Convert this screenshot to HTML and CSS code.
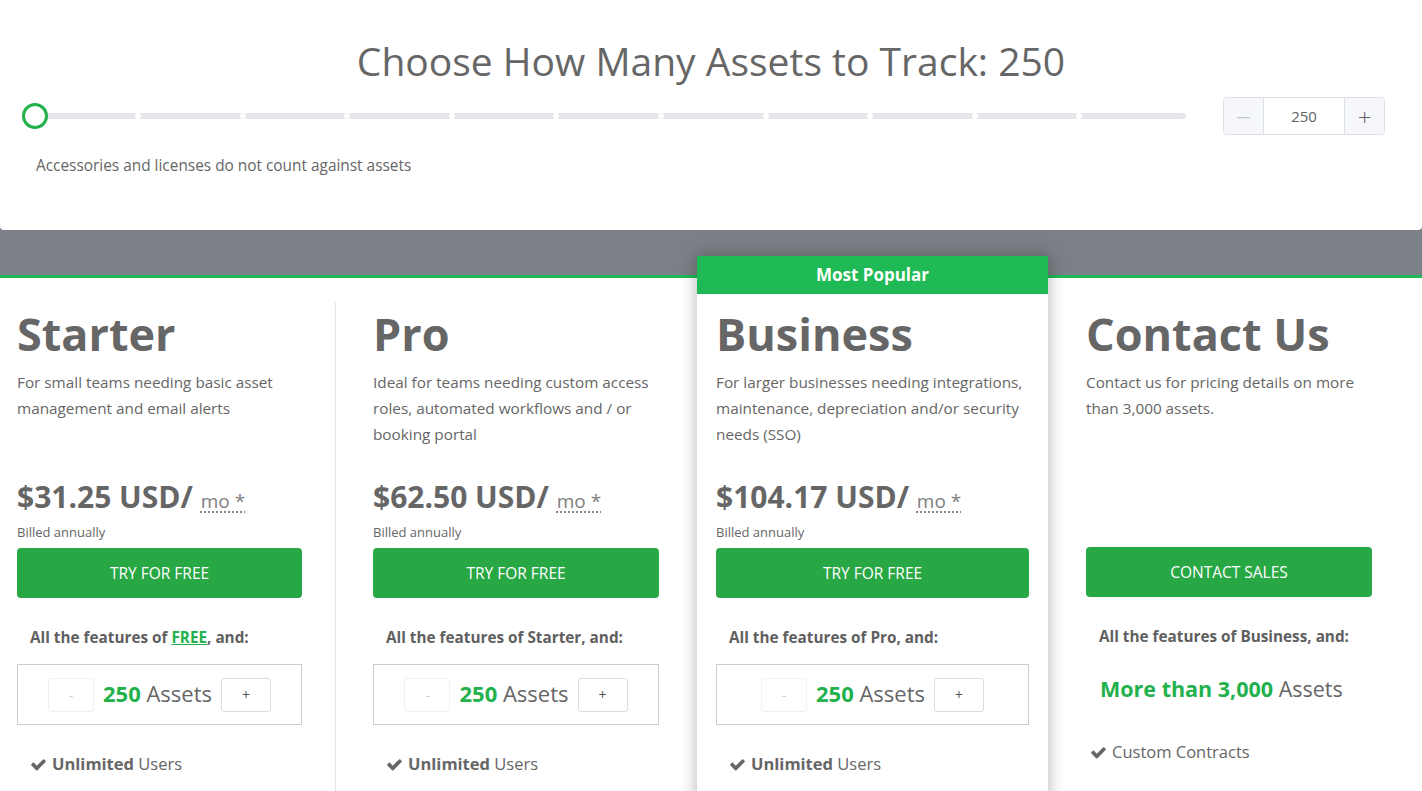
FILE: index.html
```html
<!DOCTYPE html>
<html lang="en">
<head>
    <meta charset="UTF-8">
    <meta name="viewport" content="width=device-width, initial-scale=1.0">
    <title>Pricing</title>
    <link rel="stylesheet" href="styles.css">
</head>
<body>
    <div class="band">
        <div class="picker">
            <h1>Choose How Many Assets to Track: 250</h1>
            <div class="picker-row">
                <div class="slider">
                    <div class="track">
                        <span></span><span></span><span></span><span></span><span></span><span></span>
                        <span></span><span></span><span></span><span></span><span></span>
                    </div>
                    <div class="thumb"></div>
                </div>
                <div class="stepper">
                    <button class="step minus">&#8212;</button>
                    <div class="step-value">250</div>
                    <button class="step plus">+</button>
                </div>
            </div>
            <p class="note">Accessories and licenses do not count against assets</p>
        </div>
    </div>

    <div class="plans">
        <div class="plan starter">
            <h2>Starter</h2>
            <p class="desc">For small teams needing basic asset management and email alerts</p>
            <div class="price">$31.25 USD/ <abbr>mo *</abbr></div>
            <div class="billed">Billed annually</div>
            <a class="btn">TRY FOR FREE</a>
            <div class="includes">All the features of <a class="free">FREE</a>, and:</div>
            <div class="assets">
                <button class="qty dec">-</button>
                <span class="count"><b>250</b> Assets</span>
                <button class="qty inc">+</button>
            </div>
            <div class="feature"><svg viewBox="0 0 1792 1792"><path d="M1671 566q0 40-28 68l-724 724-136 136q-28 28-68 28t-68-28l-136-136-362-362q-28-28-28-68t28-68l136-136q28-28 68-28t68 28l294 295 656-657q28-28 68-28t68 28l136 136q28 28 28 68z"/></svg><span><b>Unlimited</b> Users</span></div>
        </div>

        <div class="plan pro">
            <h2>Pro</h2>
            <p class="desc">Ideal for teams needing custom access roles, automated workflows and / or booking portal</p>
            <div class="price">$62.50 USD/ <abbr>mo *</abbr></div>
            <div class="billed">Billed annually</div>
            <a class="btn">TRY FOR FREE</a>
            <div class="includes">All the features of Starter, and:</div>
            <div class="assets">
                <button class="qty dec">-</button>
                <span class="count"><b>250</b> Assets</span>
                <button class="qty inc">+</button>
            </div>
            <div class="feature"><svg viewBox="0 0 1792 1792"><path d="M1671 566q0 40-28 68l-724 724-136 136q-28 28-68 28t-68-28l-136-136-362-362q-28-28-28-68t28-68l136-136q28-28 68-28t68 28l294 295 656-657q28-28 68-28t68 28l136 136q28 28 28 68z"/></svg><span><b>Unlimited</b> Users</span></div>
        </div>

        <div class="plan business">
            <div class="popular">Most Popular</div>
            <div class="card-body">
                <h2>Business</h2>
                <p class="desc">For larger businesses needing integrations, maintenance, depreciation and/or security needs (SSO)</p>
                <div class="price">$104.17 USD/ <abbr>mo *</abbr></div>
                <div class="billed">Billed annually</div>
                <a class="btn">TRY FOR FREE</a>
                <div class="includes">All the features of Pro, and:</div>
                <div class="assets">
                    <button class="qty dec">-</button>
                    <span class="count"><b>250</b> Assets</span>
                    <button class="qty inc">+</button>
                </div>
                <div class="feature"><svg viewBox="0 0 1792 1792"><path d="M1671 566q0 40-28 68l-724 724-136 136q-28 28-68 28t-68-28l-136-136-362-362q-28-28-28-68t28-68l136-136q28-28 68-28t68 28l294 295 656-657q28-28 68-28t68 28l136 136q28 28 28 68z"/></svg><span><b>Unlimited</b> Users</span></div>
            </div>
        </div>

        <div class="plan contact">
            <h2>Contact Us</h2>
            <p class="desc">Contact us for pricing details on more than 3,000 assets.</p>
            <div class="price-space"></div>
            <a class="btn">CONTACT SALES</a>
            <div class="includes">All the features of Business, and:</div>
            <div class="big-count"><b>More than 3,000</b> Assets</div>
            <div class="feature plain"><svg viewBox="0 0 1792 1792"><path d="M1671 566q0 40-28 68l-724 724-136 136q-28 28-68 28t-68-28l-136-136-362-362q-28-28-28-68t28-68l136-136q28-28 68-28t68 28l294 295 656-657q28-28 68-28t68 28l136 136q28 28 28 68z"/></svg><span>Custom Contracts</span></div>
        </div>
    </div>
</body>
</html>
```

FILE: styles.css
```css
body { margin: 0; font-family: "Open Sans", "Noto Sans", sans-serif; color: #666; background: #fff; overflow: hidden; }

/* top picker */
.band { background: #7a8085; padding-bottom: 45px; border-bottom: 3px solid #1fb955; }
.picker { background: #fff; height: 230px; box-sizing: border-box; padding-top: 36px; border-radius: 0 0 4px 4px; }
.picker h1 { margin: 0; text-align: center; font-size: 39px; line-height: 50px; font-weight: 400; color: #666; }
.picker-row { display: flex; align-items: center; gap: 37px; margin: 11px 37px 0 22px; }
.slider { flex: 1; position: relative; height: 26px; display: flex; align-items: center; }
.track { flex: 1; height: 6px; background: #e4e6ea; border-radius: 3px; display: flex; justify-content: space-between; align-items: center; padding: 0 103.5px 0 8.5px; }
.track span { width: 6px; height: 6px; border-radius: 50%; background: #fff; }
.thumb { position: absolute; left: 0; top: 0; width: 20px; height: 20px; border: 3px solid #22b14c; border-radius: 50%; background: #fff; }
.stepper { width: 162px; height: 38px; box-sizing: border-box; border: 1px solid #dcdfe6; border-radius: 4px; display: flex; overflow: hidden; }
.step { width: 40px; border: none; background: #f5f7fa; font-family: inherit; font-size: 20px; color: #606266; padding: 0; cursor: pointer; }
.step.minus { border-right: 1px solid #dcdfe6; color: #c0c4cc; font-size: 14px; }
.step.plus { border-left: 1px solid #dcdfe6; font-weight: 300; font-size: 24px; }
.step-value { flex: 1; display: flex; align-items: center; justify-content: center; font-size: 15px; color: #606266; }
.note { margin: 21px 0 0 36px; font-size: 15.4px; line-height: 20px; }

/* plans */
.plans { display: grid; grid-template-columns: 335px 362px 351px 1fr; align-items: start; }
.plan { margin-top: 24px; padding-top: 4px; }
.starter { padding-left: 17px; padding-right: 33px; }
.pro { border-left: 1px solid #e6e6e6; padding-left: 37px; padding-right: 38px; height: 600px; }
.contact { padding-left: 38px; padding-right: 50px; }
.business { margin-top: -22px; padding: 0; background: #fff; box-shadow: 0 0 16px rgba(0, 0, 0, 0.3); position: relative; z-index: 1; height: 600px; }
.popular { background: #1fba55; color: #fff; text-align: center; font-weight: 700; font-size: 17px; line-height: 38px; }
.card-body { padding: 12px 19px 0; }

.plan h2 { margin: 0; font-size: 45px; line-height: 56px; font-weight: 700; color: #666; }
.desc { margin: 7px 0 0; height: 110px; font-size: 15.3px; line-height: 26px; }
.price { font-size: 30px; line-height: 36px; font-weight: 700; color: #666; }
.price abbr { font-size: 19px; font-weight: 400; text-decoration: underline dotted; text-underline-offset: 4px; color: #808080; }
.billed { margin-top: 4px; font-size: 13px; line-height: 18px; }
.price-space { height: 61px; }
.btn { display: block; margin-top: 7px; height: 50px; line-height: 50px; background: #28a745; color: #fff; text-align: center; border-radius: 4px; font-size: 15.5px; cursor: pointer; }
.includes { margin-top: 29px; padding-left: 13px; font-size: 15.3px; line-height: 20px; font-weight: 700; color: #5f5f5f; }
.free { color: #22b14c; text-decoration: underline; }
.assets { margin-top: 17px; height: 61px; box-sizing: border-box; border: 1px solid #ccc; display: flex; align-items: center; justify-content: center; gap: 9px; }
.qty { height: 34px; border-radius: 3px; background: #fff; font-family: inherit; cursor: pointer; padding: 0; }
.qty.dec { width: 46px; border: 1px solid #f0f0f0; color: #ccc; font-size: 13px; }
.qty.inc { width: 50px; border: 1px solid #ddd; color: #555; font-size: 14px; }
.count { font-size: 22px; line-height: 30px; color: #666; margin-top: -4px; }
.count b, .big-count b { color: #22b14c; }
.feature { margin-top: 27px; padding-left: 13px; font-size: 16.5px; line-height: 24px; display: flex; align-items: center; }
.feature svg { width: 17px; height: 17px; fill: #666; margin-right: 5px; }
.big-count { margin-top: 28px; padding-left: 14px; font-size: 21.5px; line-height: 30px; }
.feature.plain { margin-top: 36px; padding-left: 4px; }
```
